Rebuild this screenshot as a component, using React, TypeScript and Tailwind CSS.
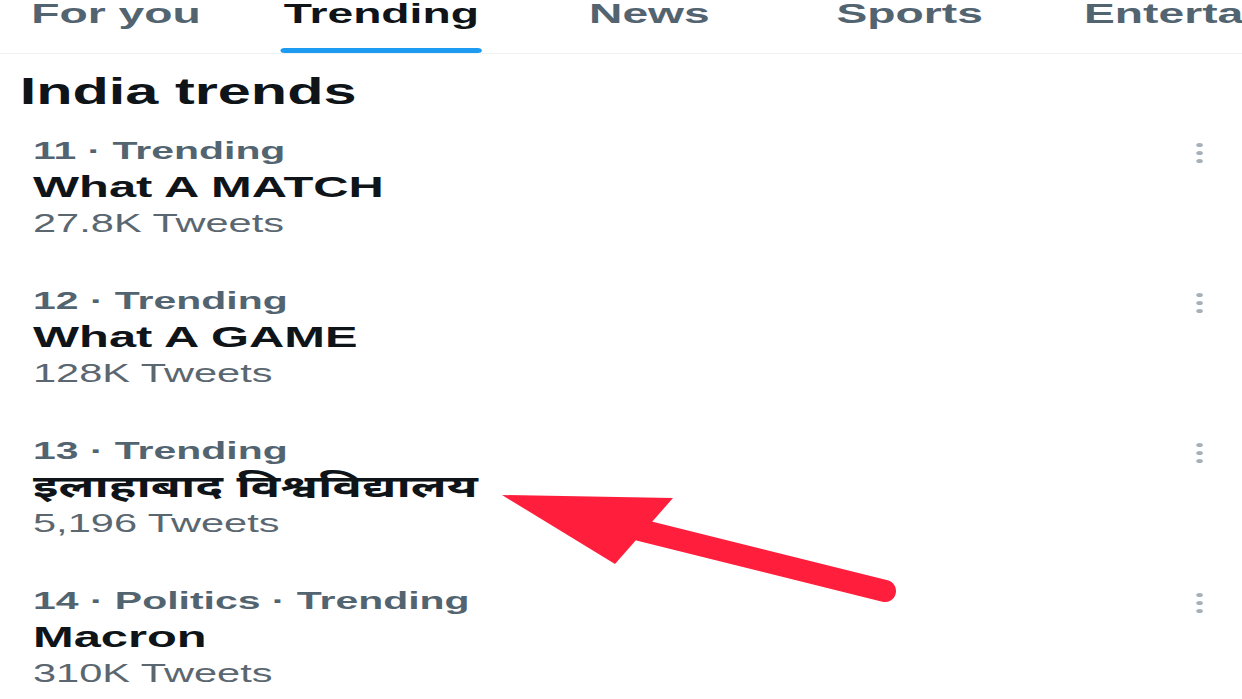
import React from "react";

interface Trend {
  meta: string;
  title: string;
  count: string;
}

const trends: Trend[] = [
  { meta: "11 · Trending", title: "What A MATCH", count: "27.8K Tweets" },
  { meta: "12 · Trending", title: "What A GAME", count: "128K Tweets" },
  { meta: "13 · Trending", title: "इलाहाबाद विश्वविद्यालय", count: "5,196 Tweets" },
  { meta: "14 · Politics · Trending", title: "Macron", count: "310K Tweets" },
];

const font = "font-['Liberation_Sans','Noto_Sans_Devanagari','Noto_Sans',sans-serif]";

function Dots() {
  return (
    <div className="mt-[9px] flex flex-col items-center gap-[4px]">
      <span className="h-[4px] w-[4px] rounded-full bg-[#a7b0b7]" />
      <span className="h-[4px] w-[4px] rounded-full bg-[#a7b0b7]" />
      <span className="h-[4px] w-[4px] rounded-full bg-[#a7b0b7]" />
    </div>
  );
}

export default function App() {
  return (
    <div className={`relative h-[699px] w-[1242px] overflow-hidden bg-white ${font}`}>
      {/* the screenshot is stretched sideways, so the page is laid out narrow and widened */}
      <div className="w-[753px] origin-top-left scale-x-[1.65]">
        <div className="flex h-[54px] border-b border-[#eff3f4] pl-[19px] text-[28px] font-bold leading-[27px]">
          <div className="w-[153px] shrink-0 text-[#536471]">For you</div>
          <div className="flex w-[185px] shrink-0">
            <div className="flex h-[53px] flex-col">
              <span className="text-[#0f1419]">Trending</span>
              <span className="-mx-[2px] mt-auto h-[5px] rounded-full bg-[#1d9bf0]" />
            </div>
          </div>
          <div className="w-[150px] shrink-0 text-[#536471]">News</div>
          <div className="w-[150px] shrink-0 text-[#536471]">Sports</div>
          <div className="shrink-0 whitespace-nowrap text-[#536471]">Entertainment</div>
        </div>

        <h1 className="mt-[18px] pl-[12px] text-[36px] font-bold leading-[40px] text-[#0f1419]">
          India trends
        </h1>

        {trends.map((t) => (
          <div key={t.meta} className="flex h-[150px] justify-between py-[22px] pl-[20px] pr-[24px]">
            <div className="min-w-0">
              <div className="text-[24.8px] font-bold leading-[34px] text-[#536471]">{t.meta}</div>
              <div className="text-[29.6px] font-bold leading-[38px] text-[#0f1419]">{t.title}</div>
              <div className="text-[25.2px] leading-[34px] text-[#5b6770]">{t.count}</div>
            </div>
            <Dots />
          </div>
        ))}
      </div>

      <svg className="pointer-events-none absolute inset-0" width="1242" height="699" viewBox="0 0 1242 699">
        <polygon points="502,495 673,498 615,564" fill="#ff1f3d" />
        <line x1="640" y1="530" x2="885" y2="591" stroke="#ff1f3d" strokeWidth="22" strokeLinecap="round" />
      </svg>
    </div>
  );
}
